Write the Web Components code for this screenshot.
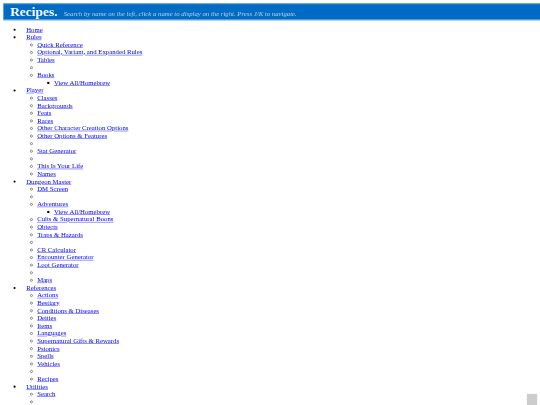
<!DOCTYPE html>
<html lang="en">
<head>
<meta charset="utf-8">
<title>Recipes</title>
<style>
html, body { margin: 0; background: #fff; overflow: hidden; height: 405px; }
body { font-family: "Liberation Serif", serif; }
</style>
</head>
<body>
<page-scale>
    <page-header title-text="Recipes." hint="Search by name on the left, click a name to display on the right. Press J/K to navigate."></page-header>
    <nav-menu></nav-menu>
</page-scale>
<scroll-top></scroll-top>
<script>
// ''  = empty item (divider in the original menu), [] = nested list
const MENU = [
    'Home',
    ['Rules', ['Quick Reference', 'Optional, Variant, and Expanded Rules', 'Tables', '', ['Books', ['View All/Homebrew']]]],
    ['Player', ['Classes', 'Backgrounds', 'Feats', 'Races', 'Other Character Creation Options', 'Other Options & Features', '', 'Stat Generator', '', 'This Is Your Life', 'Names']],
    ['Dungeon Master', ['DM Screen', '', ['Adventures', ['View All/Homebrew']], 'Cults & Supernatural Boons', 'Objects', 'Traps & Hazards', '', 'CR Calculator', 'Encounter Generator', 'Loot Generator', '', 'Maps']],
    ['References', ['Actions', 'Bestiary', 'Conditions & Diseases', 'Deities', 'Items', 'Languages', 'Supernatural Gifts & Rewards', 'Psionics', 'Spells', 'Vehicles', '', 'Recipes']],
    ['Utilities', ['Search', '']]
];

// the reference is a 1280x960 page shrunk to 540x405, so lay out at full size and scale down
class pageScale extends HTMLElement {
    constructor() {
        super();
        this.attachShadow({mode: "open"});
    }
    connectedCallback() {
        this.shadowRoot.innerHTML = `
            <style>
                :host {
                    display: block;
                    width: 540px;
                    height: 405px;
                    overflow: hidden;
                }
                .sheet {
                    display: flow-root;
                    width: 1280px;
                    height: 960px;
                    transform: scale(.421875);
                    transform-origin: 0 0;
                    filter: blur(1.1px);
                }
            </style>
            <div class="sheet"><slot></slot></div>
        `;
    }
}

class pageHeader extends HTMLElement {
    constructor() {
        super();
        this.attachShadow({mode: "open"});
    }
    connectedCallback() {
        this.shadowRoot.innerHTML = `
            <style>
                :host {
                    display: block;
                    margin: 8px 0 0 8px;
                    height: 40px;
                    box-sizing: border-box;
                    background: #006bc4;
                    border-top: 2px solid #6ea9db;
                    border-bottom: 2px solid #8fbde3;
                    color: #fff;
                }
                .bar { display: flex; align-items: baseline; gap: 14px; padding: 0 0 0 16px; white-space: nowrap; }
                h1 { margin: 0; font-size: 32px; line-height: 35px; font-weight: bold; }
                p { margin: 0; font-size: 16px; font-style: italic; color: #b9d6ee; }
            </style>
            <div class="bar">
                <h1>${this.getAttribute('title-text')}</h1>
                <p>${this.getAttribute('hint')}</p>
            </div>
        `;
    }
}

class navMenu extends HTMLElement {
    constructor() {
        super();
        this.attachShadow({mode: "open"});
    }
    renderList(items) {
        let ul = document.createElement('ul');
        for (const item of items) {
            let li = document.createElement('li');
            const name = Array.isArray(item) ? item[0] : item;
            if (name) {
                let a = document.createElement('a');
                a.href = '#';
                a.textContent = name;
                li.appendChild(a);
            }
            if (Array.isArray(item)) li.appendChild(this.renderList(item[1]));
            ul.appendChild(li);
        }
        return ul;
    }
    connectedCallback() {
        this.shadowRoot.innerHTML = `
            <style>
                :host {
                    display: block;
                    padding: 13px 0 0 8px;
                    font-size: 16px;
                    line-height: 18px;
                    color: #000;
                }
                ul { margin: 0; padding: 0 0 0 26px; }
                :host > ul { padding-left: 40px; }
                :host > ul > li { padding-left: 14px; }
                ul ul ul { padding-left: 40px; }
                li { min-height: 18px; }
                a { color: #00e; }
            </style>
        `;
        this.shadowRoot.appendChild(this.renderList(MENU));
    }
}

class scrollTop extends HTMLElement {
    constructor() {
        super();
        this.attachShadow({mode: "open"});
    }
    connectedCallback() {
        this.shadowRoot.innerHTML = `
            <style>
                :host {
                    position: fixed;
                    right: 3px;
                    bottom: 0;
                    width: 10px;
                    height: 11px;
                    background: #ccc;
                    box-shadow: 0 0 1px #ddd;
                }
            </style>
        `;
    }
}

customElements.define('page-scale', pageScale);
customElements.define('page-header', pageHeader);
customElements.define('nav-menu', navMenu);
customElements.define('scroll-top', scrollTop);
</script>
</body>
</html>
